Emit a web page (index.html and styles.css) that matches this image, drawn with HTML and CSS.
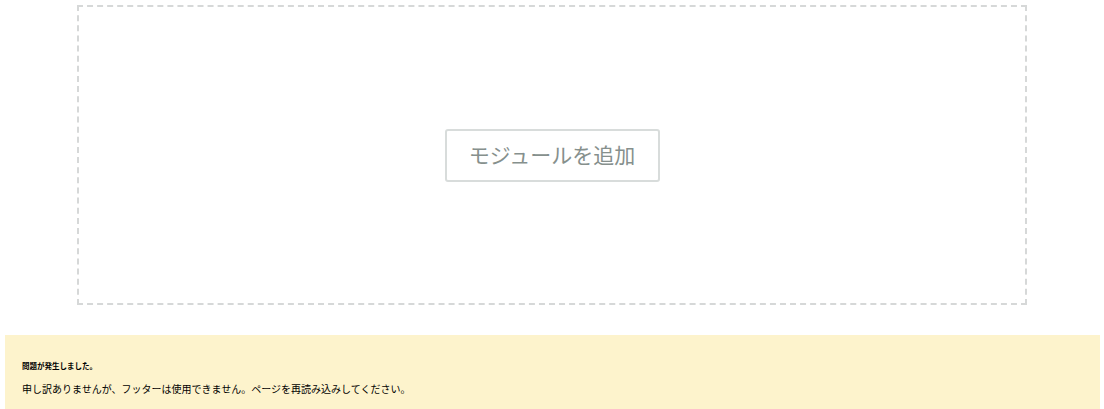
FILE: index.html
```html
<!DOCTYPE html>
<html lang="ja">

<head>
    <meta charset="UTF-8">
    <meta name="viewport" content="width=device-width, initial-scale=1.0">
    <title>モジュールを追加</title>
    <link rel="stylesheet" href="styles.css">
</head>

<body>
    <div class="module-area">
        <button type="button" class="add-module">モジュールを追加</button>
    </div>
    <div class="footer-error">
        <h5>問題が発生しました。</h5>
        <p>申し訳ありませんが、フッターは使用できません。ページを再読み込みしてください。</p>
    </div>
</body>

</html>
```

FILE: styles.css
```css
/* styles.css */
body {
    margin: 0;
    background-color: #fff;
    font-family: "Liberation Serif", "Noto Sans CJK JP", serif;
}

.module-area {
    box-sizing: border-box;
    width: 950px;
    height: 300px;
    margin: 5px auto 0;
    border: 2px dashed #d6d8d8;
    display: flex;
    justify-content: center;
    align-items: center;
}

.add-module {
    box-sizing: border-box;
    width: 215px;
    height: 53px;
    padding: 0 0 3px;
    border: 2px solid #d8dcdb;
    border-radius: 3px;
    background-color: #fff;
    color: #86908d;
    font-family: "Noto Sans CJK JP", "Noto Sans", sans-serif;
    font-size: 21px;
    cursor: pointer;
}

.footer-error {
    margin: 30px 4px 0 5px;
    padding: 27px 17px 20px;
    background-color: #fdf3cc;
    color: #000;
}

.footer-error h5 {
    margin: 0 0 11px;
    font-size: 7.5px;
    line-height: 10px;
    font-weight: bold;
}

.footer-error p {
    margin: 0;
    font-size: 10px;
    line-height: 14px;
}
```
